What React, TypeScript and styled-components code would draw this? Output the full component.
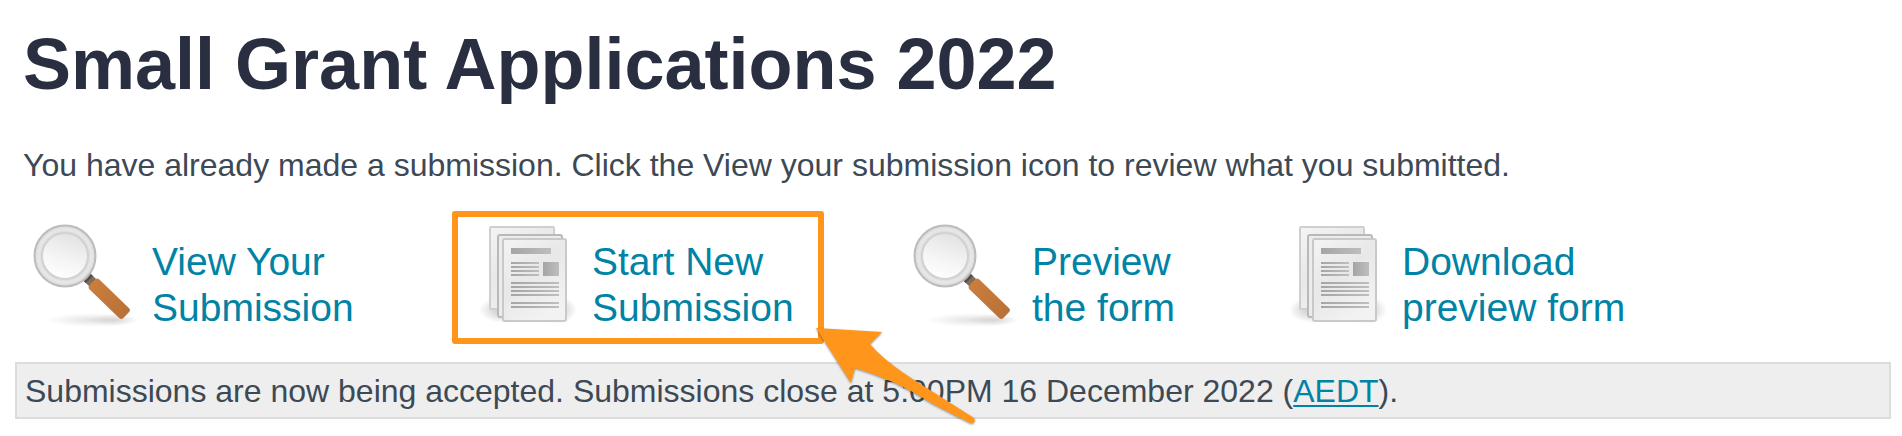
import React, { useId } from "react";
import styled, { createGlobalStyle } from "styled-components";

const GlobalStyle = createGlobalStyle`
  body {
    margin: 0;
    background: #fff;
    color: #3d4955;
    font: 32px/36px Arial, "Liberation Sans", sans-serif;
  }
`;

const Page = styled.main`
  padding: 23px 11px 16px 15px;
`;

const Intro = styled.header`
  padding: 0 8px;
`;

const Title = styled.h1`
  margin: 0 0 42px;
  color: #292e40;
  font-size: 72px;
  line-height: 82px;
`;

const Message = styled.p`
  margin: 0;
`;

const Actions = styled.ul`
  display: flex;
  margin: 40px 0 31px;
  padding: 0 0 0 17px;
  list-style: none;
`;

const Action = styled.li<{ $width: number }>`
  position: relative;
  display: flex;
  flex: none;
  width: ${(p) => p.$width}px;
`;

const ActionLink = styled.a`
  display: flex;
  align-items: flex-end;
  gap: 16px;
  color: #0083a4;
  font-size: 39px;
  line-height: 46px;
  text-decoration: none;
  white-space: nowrap;
`;

const Icon = styled.svg`
  display: block;
  flex: none;
  width: 104px;
  height: 108px;
`;

const Highlight = styled.div`
  position: absolute;
  inset: -12px 88px -13px -20px;
  box-sizing: border-box;
  border: 6px solid #ff951b;
  border-radius: 3px;
  pointer-events: none;
`;

const Arrow = styled.svg`
  position: absolute;
  top: 99px;
  left: 340px;
  width: 172px;
  height: 112px;
  pointer-events: none;
`;

const Notice = styled.p`
  margin: 0;
  padding: 9px 8px 8px;
  border: 2px solid #dcdcdc;
  background: #eee;
`;

const NoticeLink = styled.a`
  color: #0083a4;
  text-decoration: underline 2px;
  text-decoration-skip-ink: none;
  text-underline-offset: 3px;
`;

function Magnifier() {
  const id = useId();
  return (
    <Icon viewBox="0 1 104 108" aria-hidden="true">
      <defs>
        <linearGradient id={`${id}lens`} x1="0.7" y1="0" x2="0.35" y2="1">
          <stop offset="0" stopColor="#e2e2e2" />
          <stop offset="0.6" stopColor="#f5f5f5" />
          <stop offset="1" stopColor="#fff" />
        </linearGradient>
        <linearGradient id={`${id}wood`} x1="0" y1="0" x2="1" y2="0">
          <stop offset="0" stopColor="#cb7e3c" />
          <stop offset="1" stopColor="#b8713a" />
        </linearGradient>
        <radialGradient id={`${id}shade`}>
          <stop offset="0" stopColor="#000" stopOpacity="0.11" />
          <stop offset="1" stopColor="#000" stopOpacity="0" />
        </radialGradient>
      </defs>
      <ellipse cx="60" cy="98" rx="46" ry="7" fill={`url(#${id}shade)`} />
      <ellipse cx="82" cy="98" rx="24" ry="6" fill={`url(#${id}shade)`} />
      <g transform="translate(33 34) rotate(44)">
        <rect x="28" y="-5" width="14" height="10" fill="#77706a" />
        <rect x="30" y="-2" width="12" height="4" fill="#8d6b4c" />
        <rect x="31" y="-5" width="3" height="10" fill="#55504c" />
        <rect x="38" y="-7" width="47" height="14" rx="3" fill={`url(#${id}wood)`} />
      </g>
      <circle cx="33" cy="34" r="30.5" fill="#dedede" stroke="#bcbcbc" strokeWidth="2" />
      <circle cx="33" cy="34" r="26.5" fill="none" stroke="#e6e6e6" strokeWidth="3" />
      <circle cx="33" cy="34" r="23" fill={`url(#${id}lens)`} stroke="#d2d2d2" strokeWidth="2" />
    </Icon>
  );
}

const textLines = [
  [40, 28], [44, 28], [48, 28], [52, 28],
  [60, 48], [64, 48], [68, 48], [72, 48],
  [80, 48], [84, 48],
];

function Documents() {
  const id = useId();
  return (
    <Icon viewBox="0 1 104 108" aria-hidden="true">
      <defs>
        <linearGradient id={`${id}page`} x1="0" y1="0" x2="0.6" y2="1">
          <stop offset="0" stopColor="#f4f4f4" />
          <stop offset="0.5" stopColor="#e8e8e8" />
          <stop offset="1" stopColor="#f2f2f2" />
        </linearGradient>
        <linearGradient id={`${id}ink`} x1="0" y1="0" x2="1" y2="0">
          <stop offset="0" stopColor="#a5a5a5" />
          <stop offset="1" stopColor="#bebebe" />
        </linearGradient>
        <radialGradient id={`${id}shade`}>
          <stop offset="0" stopColor="#000" stopOpacity="0.24" />
          <stop offset="1" stopColor="#000" stopOpacity="0" />
        </radialGradient>
      </defs>
      <ellipse cx="31" cy="88" rx="24" ry="13" fill={`url(#${id}shade)`} />
      <ellipse cx="84" cy="88" rx="21" ry="14" fill={`url(#${id}shade)`} />
      <rect x="18" y="5" width="64" height="82" rx="1" fill={`url(#${id}page)`} stroke="#cfcfcf" strokeWidth="2" />
      <rect x="26" y="13" width="64" height="82" rx="2" fill="#ececec" stroke="#b9b9b9" strokeWidth="2" />
      <rect x="31" y="17" width="63" height="82" rx="2" fill={`url(#${id}page)`} stroke="#c9c9c9" strokeWidth="2" />
      <rect x="39" y="26" width="40" height="6" fill={`url(#${id}ink)`} />
      {textLines.map(([y, width]) => (
        <rect key={y} x="39" y={y} width={width} height="2" fill={`url(#${id}ink)`} />
      ))}
      <rect x="71" y="40" width="16" height="14" fill={`url(#${id}ink)`} />
    </Icon>
  );
}

const ArrowShape = styled.path`
  fill: #ff951b;
  filter: drop-shadow(0 1px 1px rgba(0, 0, 0, 0.4));
`;

function Pointer() {
  return (
    <Arrow viewBox="0 0 172 112" aria-hidden="true">
      <ArrowShape d="M4 6L70 10L58 22C76 43 104 59 132 77L162 96Q164 99 161 101Q159 102 156 100L121 82Q82 57 43 46L39 61Z" />
    </Arrow>
  );
}

const actions = [
  { lines: ["View Your", "Submission"], icon: Magnifier, width: 440 },
  { lines: ["Start New", "Submission"], icon: Documents, width: 440, highlighted: true },
  { lines: ["Preview", "the form"], icon: Magnifier, width: 370 },
  { lines: ["Download", "preview form"], icon: Documents, width: 370 },
];

export default function App() {
  return (
    <>
      <GlobalStyle />
      <Page>
        <Intro>
          <Title>Small Grant Applications 2022</Title>
          <Message>
            You have already made a submission. Click the View your submission icon to review what you submitted.
          </Message>
        </Intro>
        <Actions>
          {actions.map(({ lines, icon: ActionIcon, width, highlighted }) => (
            <Action key={lines.join(" ")} $width={width}>
              <ActionLink href="#">
                <ActionIcon />
                <span>
                  {lines[0]}
                  <br />
                  {lines[1]}
                </span>
              </ActionLink>
              {highlighted && (
                <>
                  <Highlight />
                  <Pointer />
                </>
              )}
            </Action>
          ))}
        </Actions>
        <Notice>
          Submissions are now being accepted. Submissions close at 5:00PM 16 December 2022 (
          <NoticeLink href="#">AEDT</NoticeLink>).
        </Notice>
      </Page>
    </>
  );
}
